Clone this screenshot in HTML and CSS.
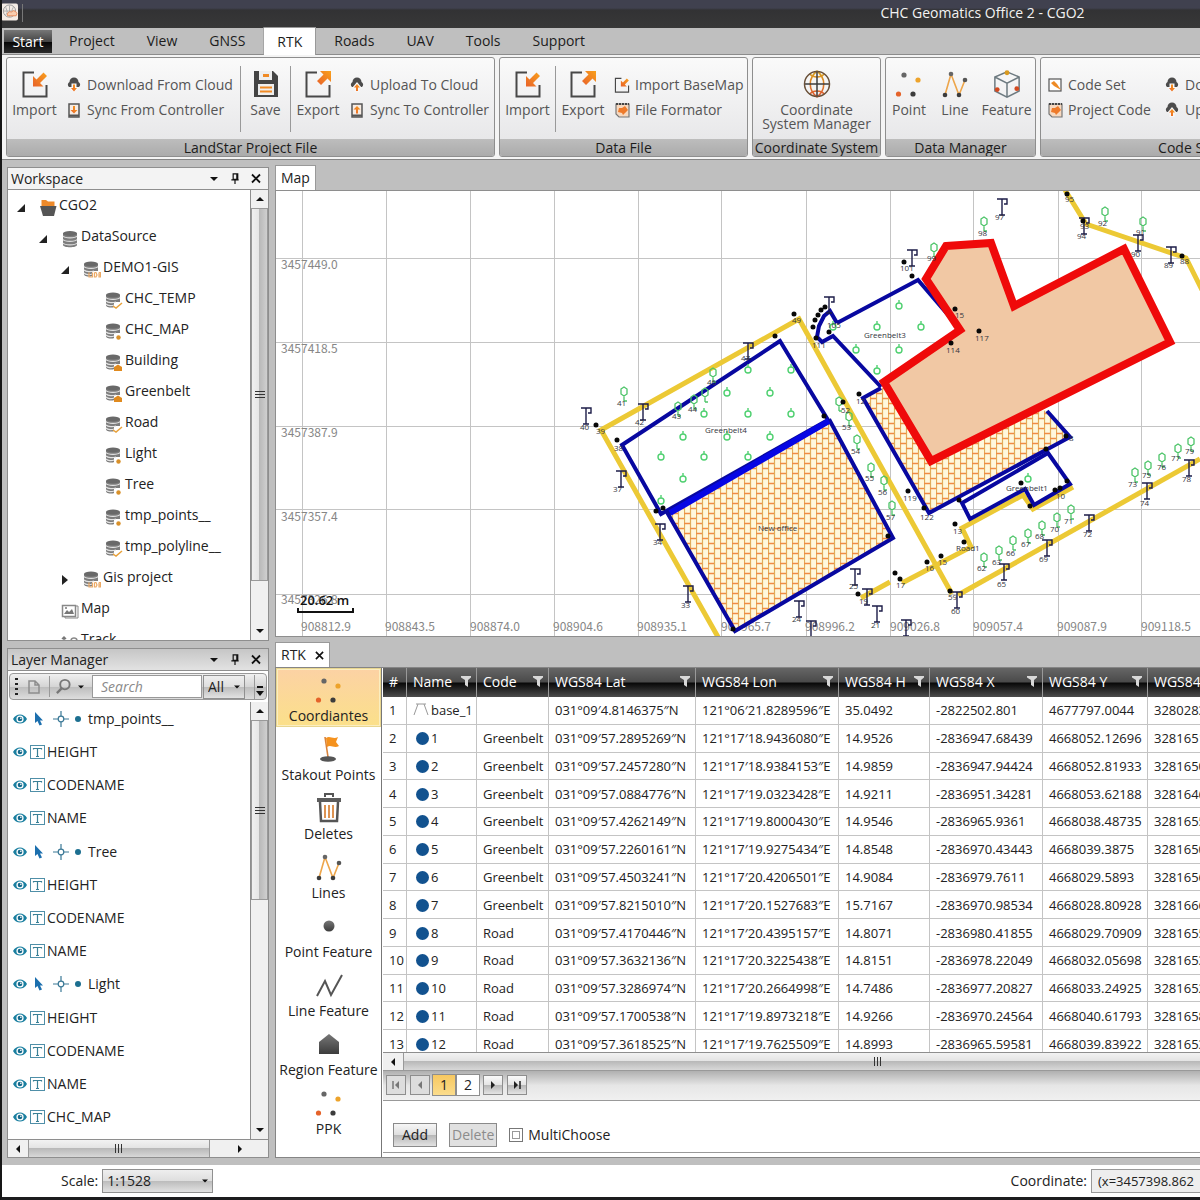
FILE: index.html
```html
<!DOCTYPE html>
<html lang="en">
<head>
<meta charset="utf-8">
<title>CHC Geomatics Office 2 - CGO2</title>
<link rel="stylesheet" href="styles.css">
</head>
<body>
<svg class="defs" aria-hidden="true">
  <defs>
    <linearGradient id="g-orange" x1="0" y1="1" x2="1" y2="0"><stop offset="0" stop-color="#e8622a"/><stop offset="1" stop-color="#f9a01b"/></linearGradient>
    <linearGradient id="g-warm" x1="0" y1="0" x2="0" y2="1"><stop offset="0" stop-color="#d9a520"/><stop offset="1" stop-color="#dd5530"/></linearGradient>
    <linearGradient id="g-gray" x1="0" y1="0" x2="0" y2="1"><stop offset="0" stop-color="#777"/><stop offset="1" stop-color="#3c3c3c"/></linearGradient>
  </defs>
  <symbol id="i-import" viewBox="0 0 28 28"><path d="M13 2.500H2.500V26.500H25.500V15" fill="none" stroke="#484848" stroke-width="2"/><path d="M12 6V16.500H22.500L19 13L26 6L22.500 2.500L15.500 9.500Z" fill="url(#g-orange)"/></symbol>
  <symbol id="i-export" viewBox="0 0 28 28"><path d="M13 2.500H2.500V26.500H25.500V15" fill="none" stroke="#484848" stroke-width="2"/><path d="M16 1H27V12L23.500 8.500L17 15L13 11L19.500 4.500Z" fill="url(#g-orange)"/></symbol>
  <symbol id="i-save" viewBox="0 0 28 28"><path d="M2 1H21L26 6V27H2Z" fill="#444"/><path d="M7 1H20V10H7Z" fill="#eee"/><path d="M11 4H17V7H11Z" fill="#f08a24"/><path d="M6 14H22V25H6Z" fill="#eee"/><path d="M8 17.500H20M8 21.500H20" stroke="#f08a24" stroke-width="2"/></symbol>
  <symbol id="i-clouddown" viewBox="0 0 16 16"><path d="M3 10A3 3 0 0 1 3.500 5A4.500 4.500 0 0 1 12.500 5A3 3 0 0 1 13 10Z" fill="#4c4c4c"/><path d="M5.500 6.500H10.500V10H13L8 16L3 10H5.500Z" fill="#f6f6f6"/><path d="M7 7.500H9V11H11L8 14.500L5 11H7Z" fill="url(#g-orange)"/></symbol>
  <symbol id="i-cloudup" viewBox="0 0 16 16"><path d="M3 10A3 3 0 0 1 3.500 5A4.500 4.500 0 0 1 12.500 5A3 3 0 0 1 13 10Z" fill="#4c4c4c"/><path d="M5.500 15H10.500V11H13L8 5L3 11H5.500Z" fill="#f6f6f6"/><path d="M7 14H9V10.500H11L8 7L5 10.500H7Z" fill="url(#g-orange)"/></symbol>
  <symbol id="i-syncdown" viewBox="0 0 16 16"><rect x="3" y="2" width="10" height="13" fill="#f6ece4" stroke="#555" stroke-width="1.500"/><path d="M7 4H9V8H11.500L8 11.500L4.500 8H7Z" fill="url(#g-orange)"/><path d="M3 13.500H13" stroke="#555" stroke-width="2"/></symbol>
  <symbol id="i-syncup" viewBox="0 0 16 16"><rect x="3" y="2" width="10" height="13" fill="#f6ece4" stroke="#555" stroke-width="1.500"/><path d="M7 11.500H9V7.500H11.500L8 4L4.500 7.500H7Z" fill="url(#g-orange)"/><path d="M3 13.500H13" stroke="#555" stroke-width="2"/></symbol>
  <symbol id="i-format" viewBox="0 0 16 16"><path d="M2 2H15V15H5L2 12Z" fill="#f7d9c0" stroke="#777" stroke-width="1.200"/><path d="M2 2H15" stroke="#444" stroke-width="2" stroke-dasharray="2 1"/><path d="M5 6L8 6L11 4L14 8L11 11L9 13L8 11L4 10Z" fill="#ee7a2a"/></symbol>
  <symbol id="i-codeset" viewBox="0 0 16 16"><rect x="2" y="2" width="12" height="12" fill="#fff" stroke="#555" stroke-width="1.200"/><path d="M4 6L7 4L10 7L14 13L7 9Z" fill="#ee8a24"/></symbol>
  <symbol id="i-globe" viewBox="0 0 28 28"><g fill="none"><path d="M7 4C10 8 18 8 21 4M7 24C10 20 18 20 21 24M14 1C5 8 5 20 14 27M14 1C23 8 23 20 14 27" stroke="url(#g-warm)" stroke-width="1.600"/><path d="M14 1V27M1 14H27" stroke="#3c3c3c" stroke-width="1.500"/><circle cx="14" cy="14" r="12.500" stroke="#6a5038" stroke-width="1.500"/></g></symbol>
  <symbol id="i-points" viewBox="0 0 28 28"><circle cx="9" cy="5" r="2.600" fill="#666"/><circle cx="23" cy="10" r="2.600" fill="#eda32b"/><circle cx="3.500" cy="24" r="2.600" fill="#e5632a"/><circle cx="18" cy="24" r="2.600" fill="#3c3c3c"/></symbol>
  <symbol id="i-lines" viewBox="0 0 28 28"><path d="M4 25L10 4L18 25L24 10" fill="none" stroke="#eda54a" stroke-width="1.600"/><circle cx="10" cy="4" r="2.300" fill="#666"/><circle cx="24" cy="10" r="2.300" fill="#555"/><circle cx="4" cy="25" r="2.300" fill="#3c3c3c"/><circle cx="18" cy="25" r="2.300" fill="#3c3c3c"/></symbol>
  <symbol id="i-cube" viewBox="0 0 30 30"><path d="M15 2L28 7.500V22.500L15 29L2 22.500V7.500ZM2 7.500L15 14L28 7.500M15 14V29" fill="none" stroke="#6d7a80" stroke-width="1.600"/><circle cx="15" cy="3" r="2.600" fill="#d99a20"/><circle cx="4.500" cy="21" r="2.600" fill="#d24a20"/><circle cx="25.500" cy="20" r="2.600" fill="#d24a20"/></symbol>
  <symbol id="i-db" viewBox="0 0 18 18"><path d="M2 3V15C2 18 16 18 16 15V3Z" fill="#7d7d7d"/><ellipse cx="9" cy="3.500" rx="7" ry="2.500" fill="#696969"/><path d="M2 6C4 8.500 14 8.500 16 6M2 9.500C4 12 14 12 16 9.500M2 13C4 15.500 14 15.500 16 13" fill="none" stroke="#ddd" stroke-width="1.200"/></symbol>
  <symbol id="i-dbs" viewBox="0 0 18 18"><path d="M1 3V13C1 16 8 16 9 15V10H15V3Z" fill="#7d7d7d"/><ellipse cx="8" cy="3" rx="7" ry="2.500" fill="#696969"/><path d="M1 5.500C3 8 13 8 15 5.500M1 9C3 11 8 11 11 10M1 12C3 14 7 14 9 13" fill="none" stroke="#e4e4e4" stroke-width="1.200"/></symbol>
  <symbol id="i-dbline" viewBox="0 0 18 18"><use href="#i-dbs"/><path d="M8 14L11 16L17 11" fill="none" stroke="#e8a13a" stroke-width="1.500"/></symbol>
  <symbol id="i-dbpoint" viewBox="0 0 18 18"><use href="#i-dbs"/><circle cx="13.500" cy="14.500" r="2.200" fill="#d8902a"/></symbol>
  <symbol id="i-dbregion" viewBox="0 0 18 18"><use href="#i-dbs"/><path d="M9 17V13L13 10.500L17 13V17Z" fill="#e08a1e"/></symbol>
  <symbol id="i-dbudb" viewBox="0 0 18 18"><use href="#i-dbs"/><path d="M6 11.500V16H9.500V11.500M11.500 11.500V16H13L14 14L13 11.500H11.500M16 11.500V16H17.500V14H16H17.500V11.500H16" fill="none" stroke="#ecaa66" stroke-width="1.200"/></symbol>
  <symbol id="i-folder" viewBox="0 0 18 18"><path d="M2.500 1H7L9 2.500H15.500V9H2.500Z" fill="#ee8a2a"/><path d="M1 7H17.500L15 17H4Z" fill="#555"/></symbol>
  <symbol id="i-pic" viewBox="0 0 18 18"><path d="M15 4H17V16H4V14" fill="none" stroke="#888"/><rect x="1.500" y="3.500" width="13" height="11" fill="#fff" stroke="#888" stroke-width="1.500"/><path d="M3 12L6 8L8 10L11 7L13 12Z" fill="#777"/><circle cx="5" cy="6" r="1" fill="#777"/></symbol>
  <symbol id="i-track" viewBox="0 0 18 18"><path d="M3 14V4M1 6L3 4L5 6" fill="none" stroke="#777" stroke-width="1.500"/><path d="M10 14V8A3 3 0 0 1 16 8V14" fill="none" stroke="#888" stroke-width="1.500"/></symbol>
  <symbol id="i-open" viewBox="0 0 10 10"><path d="M9 1V9H1Z" fill="#222"/></symbol>
  <symbol id="i-closed" viewBox="0 0 10 10"><path d="M2 0L8 5L2 10Z" fill="#222"/></symbol>
  <symbol id="i-eye" viewBox="0 0 14 12"><path d="M0 6C3 0 11 0 14 6C11 12 3 12 0 6Z" fill="#1a7fa0"/><circle cx="7" cy="6" r="3.600" fill="#fff"/><circle cx="7" cy="6" r="2.300" fill="#166a8c"/><circle cx="7.800" cy="5.200" r=".8" fill="#fff"/></symbol>
  <symbol id="i-cursor" viewBox="0 0 10 14"><path d="M1 0V11L3.500 9L5.500 13.500L8 12.500L6 8.500H9Z" fill="#1c6fae"/></symbol>
  <symbol id="i-cross" viewBox="0 0 16 16"><circle cx="8" cy="8" r="2.800" fill="none" stroke="#3a7896" stroke-width="1.200"/><path d="M8 0V5M8 11V16M0 8H5M11 8H16" stroke="#3a7896" stroke-width="1.200"/></symbol>
  <symbol id="i-text" viewBox="0 0 16 16"><rect x=".5" y="1.500" width="14" height="13" fill="#fff" stroke="#4f8fa8"/><path d="M3.500 5.500V4.500H11.500V5.500M7.500 4.500V12.500M6 12.500H9" fill="none" stroke="#3a8096" stroke-width="1.200"/></symbol>
  <symbol id="i-pin" viewBox="0 0 10 12"><path d="M3 1H8V7H3ZM7 1V7M1 7.500H9M5 8V12" fill="none" stroke="#111" stroke-width="1.300"/></symbol>
  <symbol id="i-x" viewBox="0 0 10 10"><path d="M1 1L9 9M9 1L1 9" stroke="#111" stroke-width="1.800"/></symbol>
  <symbol id="i-up" viewBox="0 0 8 8"><path d="M0 6H8L4 2Z" fill="#111"/></symbol>
  <symbol id="i-down" viewBox="0 0 8 8"><path d="M0 2H8L4 6Z" fill="#111"/></symbol>
  <symbol id="i-left" viewBox="0 0 8 8"><path d="M6 0V8L2 4Z" fill="currentColor"/></symbol>
  <symbol id="i-right" viewBox="0 0 8 8"><path d="M2 0V8L6 4Z" fill="currentColor"/></symbol>
  <symbol id="i-first" viewBox="0 0 8 8"><path d="M1 0V8" stroke="currentColor" stroke-width="1.500"/><path d="M7 0V8L3 4Z" fill="currentColor"/></symbol>
  <symbol id="i-last" viewBox="0 0 8 8"><path d="M7 0V8" stroke="currentColor" stroke-width="1.500"/><path d="M1 0V8L5 4Z" fill="currentColor"/></symbol>
  <symbol id="i-filter" viewBox="0 0 10 12"><path d="M0 1H10V2.500L7 5V12L4 10V5L0 2.500Z" fill="#d8d8d8"/></symbol>
  <symbol id="i-flag" viewBox="0 0 28 28"><path d="M10 2L13 22" stroke="#d9823a" stroke-width="1.600"/><path d="M11 3C15 0 18 5 23 2L21 7L24 11C19 14 16 9 12 12Z" fill="#f5921e"/><ellipse cx="13" cy="24" rx="8" ry="2.800" fill="#555"/></symbol>
  <symbol id="i-trash" viewBox="0 0 28 30"><path d="M10 4V1H18V4" fill="none" stroke="#555" stroke-width="2"/><path d="M2 5H26V9H2Z" fill="#5c5c5c"/><path d="M5 9L6 28H22L23 9" fill="none" stroke="#555" stroke-width="2.500"/><path d="M10 12V25M14 12V25M18 12V25" stroke="#dd9352" stroke-width="2"/></symbol>
  <symbol id="i-dot" viewBox="0 0 28 28"><circle cx="14" cy="14" r="5.500" fill="url(#g-gray)"/></symbol>
  <symbol id="i-poly" viewBox="0 0 28 28"><path d="M2 25L10 10L16 24L27 4" fill="none" stroke="#555" stroke-width="2"/></symbol>
  <symbol id="i-region" viewBox="0 0 28 28"><path d="M4 12L14 4L24 12V24H4Z" fill="url(#g-gray)"/></symbol>
  <symbol id="i-base" viewBox="0 0 16 14"><path d="M1 13L5 2M11 2L15 13M3 2H13" fill="none" stroke="#999"/></symbol>
  <symbol id="m-lamp" overflow="visible"><path d="M-5 0H5V5H2M0 0V16M-3 16H3" fill="none" stroke="#1c1c48" stroke-width="1.400"/></symbol>
  <symbol id="m-tree" overflow="visible"><path d="M-3 -3L0 -5L3 -3V2L0 4L-3 2ZM0 4V9M0 9H3" fill="none" stroke="#4cc468" stroke-width="1.300"/></symbol>
  <symbol id="m-plant" overflow="visible"><path d="M0 -5V-2M-3 1A3 3 0 1 1 3 1A3 3 0 1 1 -3 1" fill="none" stroke="#4fd070" stroke-width="1.400"/></symbol>
</svg>

<div class="app">
  <header class="titlebar">
    <svg class="logo" viewBox="0 0 18 18"><rect width="18" height="18" rx="2" fill="#f4ece6"/><circle cx="9" cy="8" r="6.500" fill="none" stroke="#999"/><path d="M3 8H15M9 2V14M5 4C7 9 7 9 5 12M13 4C11 8 11 9 13 12" fill="none" stroke="#aaa"/><path d="M7 13A3 3 0 0 1 11 9A3 3 0 0 1 16 13Z" fill="#f7cdb0" stroke="#e88a5a"/></svg>
    <h1>CHC Geomatics Office 2 - CGO2</h1>
  </header>

  <nav class="menu">
    <button class="start">Start</button>
    <button>Project</button><button>View</button><button>GNSS</button><button class="active">RTK</button><button>Roads</button><button>UAV</button><button>Tools</button><button>Support</button>
  </nav>

  <div class="ribbon">
    <section class="group g-landstar">
      <div class="tools">
        <button class="big"><svg><use href="#i-import"/></svg>Import</button>
        <div class="stack"><button><svg><use href="#i-clouddown"/></svg>Download From Cloud</button><button><svg><use href="#i-syncdown"/></svg>Sync From Controller</button></div>
        <button class="big sep"><svg><use href="#i-save"/></svg>Save</button>
        <button class="big sep"><svg><use href="#i-export"/></svg>Export</button>
        <div class="stack"><button><svg><use href="#i-cloudup"/></svg>Upload To Cloud</button><button><svg><use href="#i-syncup"/></svg>Sync To Controller</button></div>
      </div>
      <h2>LandStar Project File</h2>
    </section>
    <section class="group g-data">
      <div class="tools">
        <button class="big"><svg><use href="#i-import"/></svg>Import</button>
        <button class="big sep"><svg><use href="#i-export"/></svg>Export</button>
        <div class="stack"><button><svg><use href="#i-import"/></svg>Import BaseMap</button><button><svg><use href="#i-format"/></svg>File Formator</button></div>
      </div>
      <h2>Data File</h2>
    </section>
    <section class="group g-coord">
      <div class="tools"><button class="big wide"><svg><use href="#i-globe"/></svg>Coordinate<br>System Manager</button></div>
      <h2>Coordinate System</h2>
    </section>
    <section class="group g-manager">
      <div class="tools">
        <button class="big"><svg><use href="#i-points"/></svg>Point</button>
        <button class="big"><svg><use href="#i-lines"/></svg>Line</button>
        <button class="big"><svg><use href="#i-cube"/></svg>Feature</button>
      </div>
      <h2>Data Manager</h2>
    </section>
    <section class="group g-code">
      <div class="tools">
        <div class="stack"><button><svg><use href="#i-codeset"/></svg>Code Set</button><button><svg><use href="#i-format"/></svg>Project Code</button></div>
        <div class="stack"><button><svg><use href="#i-clouddown"/></svg>Download Code</button><button><svg><use href="#i-cloudup"/></svg>Upload Code</button></div>
      </div>
      <h2>Code Set</h2>
    </section>
  </div>

  <main class="work">
    <aside class="left">
      <section class="panel workspace">
        <header class="panel-head"><h2>Workspace</h2><button aria-label="Menu"><svg><use href="#i-down"/></svg></button><button aria-label="Pin"><svg><use href="#i-pin"/></svg></button><button aria-label="Close"><svg><use href="#i-x"/></svg></button></header>
        <div class="scroll-row">
          <ul class="tree">
            <li class="l0"><svg class="exp"><use href="#i-open"/></svg><svg><use href="#i-folder"/></svg>CGO2</li>
            <li class="l1"><svg class="exp"><use href="#i-open"/></svg><svg><use href="#i-db"/></svg>DataSource</li>
            <li class="l2"><svg class="exp"><use href="#i-open"/></svg><svg><use href="#i-dbudb"/></svg>DEMO1-GIS</li>
            <li class="l3"><svg><use href="#i-dbline"/></svg>CHC_TEMP</li>
            <li class="l3"><svg><use href="#i-dbpoint"/></svg>CHC_MAP</li>
            <li class="l3"><svg><use href="#i-dbregion"/></svg>Building</li>
            <li class="l3"><svg><use href="#i-dbregion"/></svg>Greenbelt</li>
            <li class="l3"><svg><use href="#i-dbline"/></svg>Road</li>
            <li class="l3"><svg><use href="#i-dbpoint"/></svg>Light</li>
            <li class="l3"><svg><use href="#i-dbpoint"/></svg>Tree</li>
            <li class="l3"><svg><use href="#i-dbpoint"/></svg>tmp_points__</li>
            <li class="l3"><svg><use href="#i-dbline"/></svg>tmp_polyline__</li>
            <li class="l2"><svg class="exp"><use href="#i-closed"/></svg><svg><use href="#i-dbudb"/></svg>Gis project</li>
            <li class="l1 leaf"><svg><use href="#i-pic"/></svg>Map</li>
            <li class="l1 leaf"><svg><use href="#i-track"/></svg>Track</li>
          </ul>
          <div class="vbar"><svg><use href="#i-up"/></svg><div class="track"><div class="thumb tall"></div></div><svg><use href="#i-down"/></svg></div>
        </div>
      </section>

      <section class="panel layers">
        <header class="panel-head dark"><h2>Layer Manager</h2><button aria-label="Menu"><svg><use href="#i-down"/></svg></button><button aria-label="Pin"><svg><use href="#i-pin"/></svg></button><button aria-label="Close"><svg><use href="#i-x"/></svg></button></header>
        <div class="toolbar">
          <span class="grip"></span>
          <button aria-label="New layer"><svg viewBox="0 0 14 16"><path d="M2 2H8L12 6V14H2ZM8 2V6H12" fill="none" stroke="#8d8d8d" stroke-width="1.500"/></svg></button>
          <button class="find" aria-label="Find"><svg viewBox="0 0 18 18"><circle cx="10.500" cy="7" r="5" fill="none" stroke="#777" stroke-width="2"/><path d="M7 11L2 16" stroke="#777" stroke-width="2.500"/></svg><svg class="caret"><use href="#i-down"/></svg></button>
          <input type="text" placeholder="Search" aria-label="Search layers">
          <span class="pick"><select aria-label="Layer filter"><option>All</option></select><svg class="caret"><use href="#i-down"/></svg></span>
          <button class="more" aria-label="More"><svg viewBox="0 0 10 12"><path d="M2 2H8" stroke="#111" stroke-width="2"/><path d="M1 6H9L5 11Z" fill="#111"/></svg></button>
        </div>
        <div class="scroll-row">
          <ul class="layer-list">
            <li><svg class="eye"><use href="#i-eye"/></svg><svg class="cur"><use href="#i-cursor"/></svg><svg class="crs"><use href="#i-cross"/></svg><i class="pt"></i>tmp_points__</li>
            <li><svg class="eye"><use href="#i-eye"/></svg><svg class="txt"><use href="#i-text"/></svg>HEIGHT</li>
            <li><svg class="eye"><use href="#i-eye"/></svg><svg class="txt"><use href="#i-text"/></svg>CODENAME</li>
            <li><svg class="eye"><use href="#i-eye"/></svg><svg class="txt"><use href="#i-text"/></svg>NAME</li>
            <li><svg class="eye"><use href="#i-eye"/></svg><svg class="cur"><use href="#i-cursor"/></svg><svg class="crs"><use href="#i-cross"/></svg><i class="pt"></i>Tree</li>
            <li><svg class="eye"><use href="#i-eye"/></svg><svg class="txt"><use href="#i-text"/></svg>HEIGHT</li>
            <li><svg class="eye"><use href="#i-eye"/></svg><svg class="txt"><use href="#i-text"/></svg>CODENAME</li>
            <li><svg class="eye"><use href="#i-eye"/></svg><svg class="txt"><use href="#i-text"/></svg>NAME</li>
            <li><svg class="eye"><use href="#i-eye"/></svg><svg class="cur"><use href="#i-cursor"/></svg><svg class="crs"><use href="#i-cross"/></svg><i class="pt"></i>Light</li>
            <li><svg class="eye"><use href="#i-eye"/></svg><svg class="txt"><use href="#i-text"/></svg>HEIGHT</li>
            <li><svg class="eye"><use href="#i-eye"/></svg><svg class="txt"><use href="#i-text"/></svg>CODENAME</li>
            <li><svg class="eye"><use href="#i-eye"/></svg><svg class="txt"><use href="#i-text"/></svg>NAME</li>
            <li><svg class="eye"><use href="#i-eye"/></svg><svg class="txt"><use href="#i-text"/></svg>CHC_MAP</li>
          </ul>
          <div class="vbar"><svg><use href="#i-up"/></svg><div class="track"><div class="thumb half"></div></div><svg><use href="#i-down"/></svg></div>
        </div>
        <div class="hbar layer-bar"><svg><use href="#i-left"/></svg><div class="track"><div class="thumb"></div></div><svg><use href="#i-right"/></svg></div>
      </section>
    </aside>

    <div class="right">
      <section class="dock map-dock">
        <div class="tabs"><button class="map-tab">Map</button></div>
        <svg class="map" role="img" aria-label="Survey map">
          <defs>
            <pattern id="brick" width="12" height="10" patternUnits="userSpaceOnUse"><rect width="12" height="10" fill="#fff8dc"/><path d="M0.500 0V10M6.500 0V10" stroke="#e0ac58" stroke-width="1.200"/><path d="M0 3.500H6M6 8.500H12" stroke="#f08c44" stroke-width="1.300"/></pattern>
          </defs>
          <g transform="translate(-276 -191)">
            <path class="grid" d="M302.500 191V637M386.500 191V637M470.500 191V637M554.500 191V637M638.500 191V637M721.500 191V637M806.500 191V637M890.500 191V637M973.500 191V637M1058.500 191V637M1141.500 191V637M275 258.500H3000M275 342.500H3000M275 426.500H3000M275 509.500H3000M275 594.500H3000"/>
            <g class="axis">
              <text x="281" y="269">3457449.0</text><text x="281" y="353">3457418.5</text><text x="281" y="437">3457387.9</text><text x="281" y="521">3457357.4</text><text x="281" y="604">3457326.8</text>
              <text x="301" y="631">908812.9</text><text x="385" y="631">908843.5</text><text x="470" y="631">908874.0</text><text x="553" y="631">908904.6</text><text x="637" y="631">908935.1</text><text x="721" y="631">908965.7</text><text x="805" y="631">908996.2</text><text x="890" y="631">909026.8</text><text x="973" y="631">909057.4</text><text x="1057" y="631">909087.9</text><text x="1141" y="631">909118.5</text>
            </g>
            <g class="road">
              <path d="M718 637L601 430L799 319L952 594"/><path d="M958 595L1200 459"/>
              <path d="M861 598L890 582M902 583L971 547L962 528L1023 495L1033 509L1073 487"/>
              <path d="M1065 190L1086 224L1186 258L1202 290"/>
            </g>
            <g class="navy">
              <path d="M780 341L622 445L661 514L828 420Z"/>
              <path class="paved" d="M668 514L830 421L893 538L735 631Z"/>
              <path d="M837 323L918 280L961 330L883 382M881 387L833 336L822 342L817 337L819 326L824 316L830 311L837 323"/>
              <path class="paved" d="M881 388L863 398L929 513L1070 437L1047 411"/>
              <path d="M1048 453L1070 484L1034 505L1025 489L970 519L962 503Z"/>
            </g>
            <path d="M670 513L829 421" stroke="#0606e4" stroke-width="6"/>
            <g><use href="#m-plant" x="748" y="369"/><use href="#m-plant" x="791" y="369"/><use href="#m-plant" x="727" y="392"/><use href="#m-plant" x="770" y="392"/><use href="#m-plant" x="704" y="413"/><use href="#m-plant" x="748" y="413"/><use href="#m-plant" x="791" y="413"/><use href="#m-plant" x="683" y="436"/><use href="#m-plant" x="727" y="436"/><use href="#m-plant" x="770" y="436"/><use href="#m-plant" x="661" y="456"/><use href="#m-plant" x="704" y="456"/><use href="#m-plant" x="748" y="456"/><use href="#m-plant" x="683" y="478"/><use href="#m-plant" x="661" y="500"/><use href="#m-plant" x="899" y="305"/><use href="#m-plant" x="877" y="326"/><use href="#m-plant" x="921" y="326"/><use href="#m-plant" x="856" y="349"/><use href="#m-plant" x="899" y="349"/><use href="#m-plant" x="877" y="370"/><use href="#m-plant" x="833" y="326"/><use href="#m-plant" x="1028" y="478"/></g>
            <g><use href="#m-tree" x="624" y="392"/><use href="#m-tree" x="713" y="373"/><use href="#m-tree" x="705" y="393"/><use href="#m-tree" x="694" y="400"/><use href="#m-tree" x="678" y="407"/><use href="#m-tree" x="839" y="402"/><use href="#m-tree" x="849" y="417"/><use href="#m-tree" x="857" y="440"/><use href="#m-tree" x="871" y="468"/><use href="#m-tree" x="884" y="481"/><use href="#m-tree" x="892" y="506"/><use href="#m-tree" x="984" y="558"/><use href="#m-tree" x="999" y="551"/><use href="#m-tree" x="1013" y="541"/><use href="#m-tree" x="1028" y="534"/><use href="#m-tree" x="1042" y="526"/><use href="#m-tree" x="1057" y="518"/><use href="#m-tree" x="1071" y="510"/><use href="#m-tree" x="1135" y="473"/><use href="#m-tree" x="1148" y="466"/><use href="#m-tree" x="1162" y="458"/><use href="#m-tree" x="1178" y="449"/><use href="#m-tree" x="1191" y="442"/><use href="#m-tree" x="984" y="222"/><use href="#m-tree" x="934" y="248"/><use href="#m-tree" x="1105" y="212"/><use href="#m-tree" x="1143" y="222"/></g>
            <path class="building" d="M946 246L991 243L1014 306L1124 249L1170 342L931 461L884 382L960 330L926 279Z"/>
            <g><use href="#m-lamp" x="586" y="408"/><use href="#m-lamp" x="643" y="404"/><use href="#m-lamp" x="748" y="343"/><use href="#m-lamp" x="621" y="471"/><use href="#m-lamp" x="660" y="524"/><use href="#m-lamp" x="688" y="586"/><use href="#m-lamp" x="829" y="297"/><use href="#m-lamp" x="799" y="601"/><use href="#m-lamp" x="811" y="621"/><use href="#m-lamp" x="855" y="569"/><use href="#m-lamp" x="867" y="589"/><use href="#m-lamp" x="877" y="606"/><use href="#m-lamp" x="906" y="620"/><use href="#m-lamp" x="957" y="592"/><use href="#m-lamp" x="1004" y="564"/><use href="#m-lamp" x="1047" y="540"/><use href="#m-lamp" x="1089" y="515"/><use href="#m-lamp" x="1147" y="483"/><use href="#m-lamp" x="1189" y="460"/><use href="#m-lamp" x="912" y="250"/><use href="#m-lamp" x="1002" y="199"/><use href="#m-lamp" x="1084" y="218"/><use href="#m-lamp" x="1138" y="235"/><use href="#m-lamp" x="1171" y="247"/></g>
            <path class="dots" d="M794 314h0M775 336h0M596 425h0M617 440h0M663 508h0M656 511h0M824 416h0M888 536h0M733 629h0M813 327h0M815 320h0M818 315h0M821 310h0M825 307h0M829 332h0M816 338h0M859 394h0M843 402h0M904 262h0M912 276h0M955 309h0M979 331h0M951 343h0M908 491h0M924 508h0M955 524h0M964 542h0M941 556h0M927 562h0M895 573h0M900 579h0M858 594h0M950 591h0M1021 483h0M1030 506h0M1055 490h0M1060 488h0M1067 481h0M1046 449h0M959 500h0M1066 436h0M1067 194h0M1083 221h0M1182 256h0"/>
            <g class="tag">
              <text x="580" y="430">40</text><text x="617" y="406">41</text><text x="635" y="425">42</text><text x="596" y="434">39</text><text x="614" y="451">38</text><text x="613" y="492">37</text><text x="653" y="545">34</text><text x="681" y="608">33</text><text x="672" y="419">43</text><text x="688" y="412">44</text><text x="707" y="385">46</text><text x="741" y="361">47</text><text x="792" y="323">49</text><text x="792" y="622">24</text><text x="849" y="589">25</text><text x="859" y="604">19</text><text x="871" y="628">21</text><text x="896" y="588">17</text><text x="925" y="571">16</text><text x="938" y="565">15</text><text x="953" y="534">13</text><text x="948" y="600">59</text><text x="951" y="614">60</text><text x="920" y="520">122</text><text x="903" y="501">119</text><text x="856" y="404">12</text><text x="841" y="413">52</text><text x="842" y="430">53</text><text x="851" y="454">54</text><text x="865" y="481">55</text><text x="878" y="495">56</text><text x="886" y="520">57</text><text x="977" y="571">62</text><text x="992" y="565">63</text><text x="997" y="587">65</text><text x="1006" y="556">66</text><text x="1021" y="547">67</text><text x="1035" y="539">68</text><text x="1039" y="562">69</text><text x="1050" y="532">70</text><text x="1064" y="524">71</text><text x="1083" y="537">72</text><text x="1128" y="487">73</text><text x="1140" y="506">74</text><text x="1142" y="478">75</text><text x="1157" y="470">76</text><text x="1171" y="461">77</text><text x="1182" y="482">78</text><text x="1185" y="454">79</text><text x="1056" y="499">10</text><text x="1069" y="441">8</text><text x="900" y="271">101</text><text x="927" y="261">99</text><text x="978" y="236">98</text><text x="995" y="220">97</text><text x="1065" y="202">95</text><text x="1080" y="229">93</text><text x="1077" y="239">94</text><text x="1098" y="226">92</text><text x="1136" y="235">91</text><text x="1131" y="257">90</text><text x="1164" y="268">89</text><text x="1180" y="264">88</text><text x="955" y="318">15</text><text x="946" y="353">114</text><text x="975" y="341">117</text><text x="812" y="348">111</text><text x="827" y="328">105</text>
              <text x="864" y="338">Greenbelt3</text><text x="705" y="433">Greenbelt4</text><text x="758" y="531">New office</text><text x="1006" y="491">Greenbelt1</text><text x="956" y="551">Road1</text>
            </g>
            <text class="scale" x="300" y="605">20.62 m</text>
            <path d="M298 608V612H353V608" fill="none" stroke="#111" stroke-width="2"/>
          </g>
        </svg>
      </section>

      <section class="dock rtk-dock">
        <div class="tabs"><button class="rtk-tab">RTK <svg><use href="#i-x"/></svg></button></div>
        <div class="rtk">
          <nav class="side">
            <button class="active"><svg><use href="#i-points"/></svg>Coordiantes</button>
            <button><svg><use href="#i-flag"/></svg>Stakout Points</button>
            <button><svg><use href="#i-trash"/></svg>Deletes</button>
            <button><svg><use href="#i-lines"/></svg>Lines</button>
            <button><svg><use href="#i-dot"/></svg>Point Feature</button>
            <button><svg><use href="#i-poly"/></svg>Line Feature</button>
            <button><svg><use href="#i-region"/></svg>Region Feature</button>
            <button><svg><use href="#i-points"/></svg>PPK</button>
          </nav>
          <div class="data">
            <div class="table-wrap">
              <table>
                <colgroup><col class="c-n"><col class="c-name"><col class="c-code"><col class="c-lat"><col class="c-lon"><col class="c-h"><col class="c-x"><col class="c-y"><col class="c-z"></colgroup>
                <thead><tr><th>#</th><th>Name<svg><use href="#i-filter"/></svg></th><th>Code<svg><use href="#i-filter"/></svg></th><th>WGS84 Lat<svg><use href="#i-filter"/></svg></th><th>WGS84 Lon<svg><use href="#i-filter"/></svg></th><th>WGS84 H<svg><use href="#i-filter"/></svg></th><th>WGS84 X<svg><use href="#i-filter"/></svg></th><th>WGS84 Y<svg><use href="#i-filter"/></svg></th><th>WGS84 Z</th></tr></thead>
                <tbody>
                  <tr><td>1</td><td><svg class="base"><use href="#i-base"/></svg>base_1</td><td></td><td>031°09′4.8146375″N</td><td>121°06′21.8289596″E</td><td>35.0492</td><td>-2822502.801</td><td>4677797.0044</td><td>3280283</td></tr>
                  <tr><td>2</td><td><i></i>1</td><td>Greenbelt</td><td>031°09′57.2895269″N</td><td>121°17′18.9436080″E</td><td>14.9526</td><td>-2836947.68439</td><td>4668052.12696</td><td>3281651</td></tr>
                  <tr><td>3</td><td><i></i>2</td><td>Greenbelt</td><td>031°09′57.2457280″N</td><td>121°17′18.9384153″E</td><td>14.9859</td><td>-2836947.94424</td><td>4668052.81933</td><td>3281650</td></tr>
                  <tr><td>4</td><td><i></i>3</td><td>Greenbelt</td><td>031°09′57.0884776″N</td><td>121°17′19.0323428″E</td><td>14.9211</td><td>-2836951.34281</td><td>4668053.62188</td><td>3281646</td></tr>
                  <tr><td>5</td><td><i></i>4</td><td>Greenbelt</td><td>031°09′57.4262149″N</td><td>121°17′19.8000430″E</td><td>14.9546</td><td>-2836965.9361</td><td>4668038.48735</td><td>3281655</td></tr>
                  <tr><td>6</td><td><i></i>5</td><td>Greenbelt</td><td>031°09′57.2260161″N</td><td>121°17′19.9275434″E</td><td>14.8548</td><td>-2836970.43443</td><td>4668039.3875</td><td>3281650</td></tr>
                  <tr><td>7</td><td><i></i>6</td><td>Greenbelt</td><td>031°09′57.4503241″N</td><td>121°17′20.4206501″E</td><td>14.9084</td><td>-2836979.7611</td><td>4668029.5893</td><td>3281656</td></tr>
                  <tr><td>8</td><td><i></i>7</td><td>Greenbelt</td><td>031°09′57.8215010″N</td><td>121°17′20.1527683″E</td><td>15.7167</td><td>-2836970.98534</td><td>4668028.80928</td><td>3281666</td></tr>
                  <tr><td>9</td><td><i></i>8</td><td>Road</td><td>031°09′57.4170446″N</td><td>121°17′20.4395157″E</td><td>14.8071</td><td>-2836980.41855</td><td>4668029.70909</td><td>3281655</td></tr>
                  <tr><td>10</td><td><i></i>9</td><td>Road</td><td>031°09′57.3632136″N</td><td>121°17′20.3225438″E</td><td>14.8151</td><td>-2836978.22049</td><td>4668032.05698</td><td>3281653</td></tr>
                  <tr><td>11</td><td><i></i>10</td><td>Road</td><td>031°09′57.3286974″N</td><td>121°17′20.2664998″E</td><td>14.7486</td><td>-2836977.20827</td><td>4668033.24925</td><td>3281652</td></tr>
                  <tr><td>12</td><td><i></i>11</td><td>Road</td><td>031°09′57.1700538″N</td><td>121°17′19.8973218″E</td><td>14.9266</td><td>-2836970.24564</td><td>4668040.61793</td><td>3281658</td></tr>
                  <tr><td>13</td><td><i></i>12</td><td>Road</td><td>031°09′57.3618525″N</td><td>121°17′19.7625509″E</td><td>14.8993</td><td>-2836965.59581</td><td>4668039.83922</td><td>3281653</td></tr>
                </tbody>
              </table>
            </div>
            <div class="hbar table-bar"><svg><use href="#i-left"/></svg><div class="track"><div class="thumb"></div></div></div>
            <div class="pager">
              <button class="nav" disabled aria-label="First"><svg><use href="#i-first"/></svg></button><button class="nav" disabled aria-label="Previous"><svg><use href="#i-left"/></svg></button><span class="pages"><button class="current">1</button><button>2</button></span><button class="nav" aria-label="Next"><svg><use href="#i-right"/></svg></button><button class="nav" aria-label="Last"><svg><use href="#i-last"/></svg></button>
            </div>
            <div class="actions">
              <button>Add</button><button disabled>Delete</button><label><input type="checkbox"> MultiChoose</label>
            </div>
          </div>
        </div>
      </section>
    </div>
  </main>

  <footer class="status">
    <label for="scale">Scale:</label>
    <span class="pick"><select id="scale"><option>1:1528</option></select><svg class="caret"><use href="#i-down"/></svg></span>
    <label class="coord" for="coord">Coordinate:</label>
    <input id="coord" type="text" value="(x=3457398.862" readonly>
  </footer>
</div>
</body>
</html>
```
FILE: styles.css
```css
* { box-sizing: border-box; }

body {
  margin: 0;
  background: #bfbfbf;
  color: #222;
  font: 14px/18px "Open Sans", "Noto Sans", sans-serif;
}

button, input, select { font: inherit; color: inherit; }
button { margin: 0; padding: 0; border: 0; background: none; white-space: nowrap; }
h1, h2, ul { margin: 0; padding: 0; font-size: inherit; font-weight: 400; list-style: none; }
svg { display: block; flex: none; overflow: hidden; }
.defs { position: absolute; width: 0; height: 0; }

.app {
  display: flex;
  flex-direction: column;
  height: 100vh;
  min-height: 900px;
  border-left: 2px solid #161616;
  border-bottom: 3px solid #1c1c1e;
  overflow: hidden;
}

/* Title bar and menu */
.titlebar {
  display: flex;
  align-items: center;
  flex: none;
  height: 28px;
  padding-bottom: 2px;
  background: linear-gradient(#40414f 0 8px, #323234 10px, #383838);
  color: #f2f2f2;
}
.logo { width: 17px; height: 18px; margin-top: -2px; margin-left: -1px; }
.titlebar h1 { flex: 1; padding-left: 742px; text-align: center; border-left: 1px solid #777; margin-left: 4px; font-weight: 500; white-space: nowrap; }

.menu { display: flex; flex: none; height: 27px; padding-left: 2px; border-bottom: 1px solid #8c8c8c; }
.menu button { height: 26px; padding: 0 16px; color: #1c1c1c; }
.menu .start {
  margin: 2px 1px 1px 0;
  width: 48px;
  height: 23px;
  padding: 0;
  background: linear-gradient(#777 0, #444 50%, #050505 52%, #2c2c2c);
  color: #fff;
  font-weight: 500;
}
.menu .active { background: #fff; box-shadow: 0 0 0 1px #999; height: 27px; clip-path: inset(-1px -1px 0 -1px); margin: 0 3px; padding: 0 13px; }

/* Ribbon */
.ribbon {
  display: flex;
  flex: none;
  gap: 4px;
  height: 105px;
  padding: 2px 0 2px 4px;
  background: #f4f4f4;
  border-bottom: 1px solid #858585;
  color: #555;
}
.group { display: flex; flex-direction: column; flex: none; border: 1px solid #8e8e8e; border-radius: 3px; background: linear-gradient(#fafafa, #e4e4e6); overflow: hidden; }
.group h2 { height: 17px; line-height: 18px; text-align: center; color: #1c1c1c; background: linear-gradient(#bdbdbd, #ababab); white-space: nowrap; }
.tools { display: flex; flex: 1; padding-top: 8px; }
.g-landstar { width: 489px; }
.g-data { width: 249px; }
.g-coord { width: 129px; }
.g-manager { width: 151px; }
.g-code { width: 294px; }
.big { display: flex; flex-direction: column; align-items: center; width: 55px; height: 66px; padding-top: 4px; line-height: 14px; }
.big svg { width: 28px; height: 28px; margin-bottom: 5px; }
.big.sep { border-left: 1px solid #999; }
.big.wide { width: 100%; }
.g-landstar .sep { width: 50px; }
.g-landstar .sep + .sep { width: 55px; }
.g-manager .big { width: 46px; }
.g-manager .big:last-child { width: 57px; }
.stack { display: flex; flex-direction: column; gap: 7px; padding: 10px 0 0 4px; }
.stack button { display: flex; align-items: center; gap: 5px; height: 18px; }
.stack svg { width: 16px; height: 16px; }
.g-landstar .stack:nth-child(2) { width: 178px; }
.g-code .stack { width: 117px; flex: none; padding-left: 6px; }

/* Work area */
.work { display: flex; flex: 1; min-height: 0; gap: 6px; padding: 7px 0 7px 5px; }
.left { display: flex; flex-direction: column; gap: 7px; width: 262px; flex: none; }
.panel { display: flex; flex-direction: column; min-height: 0; border: 1px solid #8e8e8e; background: #fff; }
.workspace { flex: 474 1 0; }
.layers { flex: 510 1 0; }
.panel-head { display: flex; align-items: center; flex: none; height: 22px; padding: 0 2px 0 3px; background: #f3f3f3; border-bottom: 1px solid #8e8e8e; }
.panel-head.dark { background: linear-gradient(#c6c6c6, #e2e2e2); }
.panel-head h2 { flex: 1; }
.panel-head button { width: 21px; height: 18px; display: grid; place-items: center; }
.panel-head svg { width: 8px; height: 8px; }
.panel-head button + button svg { width: 10px; height: 11px; }
.scroll-row { display: flex; flex: 1; min-height: 0; }

.tree { flex: 1; overflow: hidden; padding-top: 1px; }
.tree li { display: flex; align-items: center; gap: 2px; height: 31px; padding-bottom: 4px; white-space: nowrap; }
.tree svg { width: 18px; height: 18px; position: relative; top: 3px; }
.tree .exp { width: 10px; height: 10px; margin-right: 11px; }
.tree .l0 { padding-left: 8px; }
.tree .l1 { padding-left: 30px; }
.tree .l2 { padding-left: 52px; }
.tree .l3 { padding-left: 97px; }
.tree .leaf { padding-left: 53px; }

.vbar { display: flex; flex-direction: column; align-items: center; width: 18px; flex: none; border-left: 1px solid #8e8e8e; background: #f0f0f0; padding: 5px 0; gap: 5px; }
.vbar svg { width: 8px; height: 8px; }
.track { position: relative; flex: 1; }
.vbar .track { width: 100%; }
.thumb { position: relative; border: 1px solid #999; background: linear-gradient(90deg, #f0f0f0, #e6e6e6 45%, #b9b9b9 50%, #cfcfcf); }
.thumb.tall { height: 90%; }
.thumb.half { height: 45%; }
.thumb::after { content: ""; position: absolute; left: 3px; top: 50%; width: 10px; height: 7px; margin-top: -3px; background: repeating-linear-gradient(#333 0 1px, transparent 1px 3px); }
.hbar { display: flex; align-items: center; flex: none; height: 18px; border-top: 1px solid #8e8e8e; background: #f0f0f0; color: #111; }
.hbar svg { width: 8px; height: 8px; margin: 0 6px; }
.layer-bar svg:last-child { margin-right: 24px; }
.hbar .track { height: 100%; }
.hbar .thumb { height: 100%; width: 182px; border-width: 0 1px; background: linear-gradient(#f2f2f2, #e4e4e4 45%, #b9b9b9 50%, #d8d8d8); }
.hbar .thumb::after { left: 50%; top: 4px; width: 7px; height: 9px; margin: 0 0 0 -4px; background: repeating-linear-gradient(90deg, #333 0 1px, transparent 1px 3px); }
.table-bar .thumb { width: 950px; }

.toolbar { display: flex; align-items: center; flex: none; height: 27px; margin: 2px 1px; padding-left: 5px; border: 1px solid #999; border-radius: 4px; background: linear-gradient(#f0f0f0, #d5d5d5 50%, #bdbdbd 52%, #ddd); }
.grip { width: 3px; height: 17px; background: repeating-linear-gradient(#222 0 2px, transparent 2px 5px); }
.toolbar button { display: flex; align-items: center; height: 21px; padding: 0 8px 0 9px; }
.toolbar svg { width: 14px; height: 16px; }
.toolbar .find { border-left: 1px solid #999; padding: 0 8px 0 5px; gap: 6px; }
.toolbar .find svg { width: 17px; height: 17px; }
.toolbar .find .caret { width: 6px; height: 6px; }
.toolbar input { flex: 1; min-width: 0; height: 23px; padding: 0 8px; border: 1px solid #999; background: #fff; font-style: italic; }
.toolbar input::placeholder { color: #8a8a8a; }
.toolbar .pick { width: 42px; height: 24px; margin-left: 1px; }
.toolbar .more { width: 12px; height: 24px; margin-left: 9px; padding: 8px 0 0 0; border-left: 1px solid #999; }
.toolbar .more svg { width: 10px; height: 12px; }

.pick { position: relative; display: inline-flex; border: 1px solid #909090; background: linear-gradient(#eee, #dedede 50%, #bdbdbd 52%, #e2e2e2); }
.pick select { width: 100%; height: 100%; padding: 0 4px; border: 0; background: none; appearance: none; }
.pick .caret { position: absolute; right: 4px; top: 50%; width: 6px; height: 6px; margin-top: -3px; pointer-events: none; }

.layer-list { display: grid; grid-auto-rows: 1fr; flex: 1; margin: 0; padding: 0 0 5px 5px; overflow: hidden; }
.layer-list li { display: flex; align-items: center; white-space: nowrap; }
.layer-list .eye { width: 14px; height: 12px; margin-right: 3px; }
.layer-list .txt { width: 16px; height: 16px; margin-right: 1px; }
.layer-list .cur { width: 10px; height: 14px; margin: 0 9px 0 4px; }
.layer-list .crs { width: 16px; height: 16px; }
.pt { width: 6px; height: 6px; border-radius: 50%; background: #1c6f90; margin: 0 7px 0 6px; }

/* Map */
.right { display: flex; flex-direction: column; flex: 1; min-width: 0; gap: 5px; }
.dock { display: flex; flex-direction: column; min-height: 0; }
.map-dock { flex: 473 1 0; margin-top: -2px; }
.rtk-dock { flex: 517 1 0; }
.tabs { flex: none; height: 25px; }
.tabs button { display: flex; align-items: center; height: 25px; background: #fff; border: 1px solid #999; border-bottom: 0; padding: 0 5px; }
.tabs svg { width: 9px; height: 9px; margin-left: 9px; }
.map { flex: 1; width: 100%; min-height: 0; border: 1px solid #8e8e8e; border-right: 0; background: #fff; }
.map .grid { stroke: #c4c4c4; fill: none; }
.axis text { font-family: "Noto Sans CJK SC", "Open Sans", sans-serif; font-size: 12px; fill: #868686; }
.road path { fill: none; stroke: #ecc935; stroke-width: 5; }
.navy path { fill: none; stroke: #0808a0; stroke-width: 4; }
.navy .paved { fill: url(#brick); }
.building { fill: #f1c8a4; stroke: #ef0a0a; stroke-width: 8; }
.dots { stroke: #080808; stroke-width: 5; stroke-linecap: round; }
.tag text { font-size: 8px; fill: #34343c; }
.map .scale { font-size: 13px; font-weight: 600; fill: #111; }

/* RTK data */
.rtk { display: flex; flex: 1; min-height: 0; border: 1px solid #858585; border-right: 0; background: #fff; }
.side { width: 106px; flex: none; border-right: 1px solid #777; }
.side button { display: flex; flex-direction: column; align-items: center; gap: 2px; width: 105px; height: 59px; padding-top: 7px; }
.side svg { width: 28px; height: 30px; }
.side .active { background: linear-gradient(#fcd2a4, #fbe08a); border: 1px solid #e8d690; box-shadow: inset 0 0 0 1px #fbeec0; padding-top: 6px; }
.data { display: flex; flex-direction: column; flex: 1; min-width: 0; padding-left: 1px; }
.table-wrap { flex: 1; min-height: 0; overflow: hidden; }
table { width: 875px; height: 390px; table-layout: fixed; border-collapse: separate; border-spacing: 0; }
.c-n { width: 24px; }
.c-name { width: 70px; }
.c-code { width: 72px; }
.c-lat { width: 147px; }
.c-lon { width: 143px; }
.c-h { width: 91px; }
.c-x { width: 113px; }
.c-y { width: 105px; }
.c-z { width: 110px; }
th { position: relative; height: 29px; padding: 0 0 1px 6px; text-align: left; font-weight: 500; color: #fff; background: linear-gradient(#666, #4a4a4a 48%, #080808 52%, #4c4c4c); border-right: 1px solid #999; white-space: nowrap; }
th svg { position: absolute; right: 5px; top: 7px; width: 10px; height: 12px; }
td { padding: 0 0 0 6px; border: solid #c4c4c4; border-width: 0 1px 1px 0; white-space: nowrap; font-size: 13px; line-height: 18px; }
td i { display: inline-block; width: 13px; height: 13px; margin: 0 2px 0 3px; border-radius: 50%; background: #12528f; vertical-align: -2px; }
td svg.base { display: inline-block; width: 16px; height: 14px; margin-right: 2px; vertical-align: -1px; }

.pager { display: flex; align-items: center; flex: none; height: 31px; padding: 0 0 1px 3px; gap: 4px; background: linear-gradient(#b0b0b0, #e6e6e6 50%, #f0f0f0); border: solid #999; border-width: 1px 0; }
.pager button { width: 20px; height: 20px; display: grid; place-items: center; border: 1px solid #8e8e8e; background: linear-gradient(#fafafa, #e4e4e4 50%, #b8b8b8 52%, #e4e4e4); }
.pager button:disabled { background: #ddd; color: #777; }
.pager svg { width: 8px; height: 8px; }
.pages { display: flex; margin: 0 -1px 0 -2px; }
.pager .pages button { width: 24px; height: 22px; background: #fff; }
.pager .pages .current { background: linear-gradient(#f7c860, #fbdc8c); }

.actions { display: flex; align-items: center; flex: none; height: 52px; margin-bottom: 4px; padding: 16px 0 0 10px; gap: 12px; border-bottom: 1px solid #999; }
.actions button { height: 24px; padding: 0 2px; border: 1px solid #8a8a8a; background: linear-gradient(#f6f6f6, #dedede 50%, #b8b8b8 52%, #e2e2e2); min-width: 44px; }
.actions button:disabled { background: #e0e0e0; color: #8c8c8c; }
.actions label { display: flex; align-items: center; gap: 5px; }
.actions input { appearance: none; width: 14px; height: 14px; margin: 0; border: 1px solid #777; outline: 1px solid #999; outline-offset: -4px; background: #fff; }

/* Status bar */
.status { display: flex; align-items: center; flex: none; height: 32px; padding-left: 59px; background: #fff; gap: 4px; overflow: hidden; }
.status .pick { width: 111px; height: 24px; }
.status .coord { margin-left: auto; }
.status input { flex: none; width: 109px; height: 24px; padding: 0 0 0 6px; border: 1px solid #999; border-right: 0; background: #eee; font-size: 13px; }
```
